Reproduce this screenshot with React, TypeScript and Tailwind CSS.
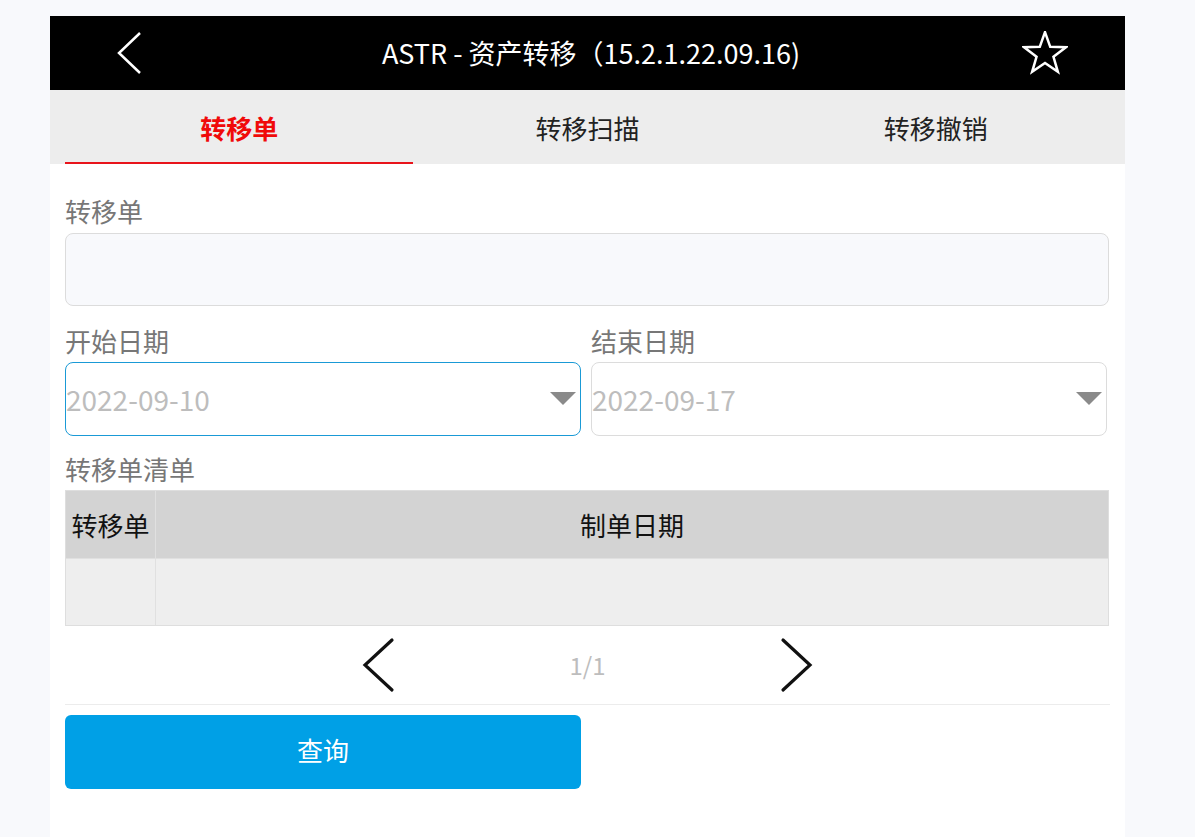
import { ReactNode } from 'react'

const font = { fontFamily: '"Noto Sans CJK SC", "Noto Sans", sans-serif' }

function Label({ children }: { children: ReactNode }) {
  return <div className="h-[36px] leading-[36px] text-[26px] text-[#777]">{children}</div>
}

function DateField({ value, active }: { value: string; active?: boolean }) {
  return (
    <div
      className={`flex h-[74px] flex-1 items-center justify-between rounded-lg border bg-white pr-[4px] ${
        active ? 'border-[#1a9ad6]' : 'border-[#dcdcdc]'
      }`}
    >
      <span className="text-[28px] text-[#bdbdbd]">{value}</span>
      <svg width="26" height="14" viewBox="0 0 26 14">
        <polygon points="0,0 26,0 13,13" fill="#8a8a8a" />
      </svg>
    </div>
  )
}

export default function App() {
  return (
    <div className="min-h-[837px] bg-[#f8f9fc] pt-[16px]" style={font}>
      <div className="ml-[50px] min-h-[821px] w-[1075px] bg-white">
        {/* Header */}
        <div className="flex h-[74px] items-center bg-black">
          <div className="pl-[60px]">
            <svg width="40" height="44" viewBox="0 0 40 44">
              <polyline points="30,2 9,22 30,42" fill="none" stroke="#fff" strokeWidth="2.5" />
            </svg>
          </div>
          <div className="flex-1 pl-[10px] text-center text-[27px] text-white">ASTR - 资产转移（15.2.1.22.09.16)</div>
          <div className="pr-[57px]">
            <svg width="46" height="44" viewBox="0 0 44 42">
              <polygon
                points="22,1 27,15.1 42,15.5 30.1,24.6 34.3,39 22,30.5 9.7,39 13.9,24.6 2,15.5 17,15.1"
                fill="none"
                stroke="#fff"
                strokeWidth="2.4"
                strokeLinejoin="miter"
              />
            </svg>
          </div>
        </div>

        {/* Tabs */}
        <div className="flex h-[74px] bg-[#ededed] px-[15px]">
          <div className="flex flex-1 items-center justify-center border-b-[2px] border-[#e8141b] pt-[2px] text-[26px] font-bold text-[#f00a0a]">
            转移单
          </div>
          <div className="flex flex-1 items-center justify-center text-[26px] text-[#222]">转移扫描</div>
          <div className="flex flex-1 items-center justify-center text-[26px] text-[#222]">转移撤销</div>
        </div>

        {/* Form */}
        <div className="px-[15px] pt-[29px]">
          <div className="pr-[1px]">
            <Label>转移单</Label>
            <div className="mt-[4px] h-[73px] rounded-lg border border-[#dcdcdc] bg-[#f8f9fc]" />
          </div>

          <div className="mt-[17px] flex gap-[10px] pr-[3px]">
            <div className="flex-1">
              <Label>开始日期</Label>
              <div className="mt-[3px] flex">
                <DateField value="2022-09-10" active />
              </div>
            </div>
            <div className="flex-1">
              <Label>结束日期</Label>
              <div className="mt-[3px] flex">
                <DateField value="2022-09-17" />
              </div>
            </div>
          </div>

          <div className="mt-[15px]">
            <Label>转移单清单</Label>
            <div className="mt-[3px] mr-[1px] border border-[#dedede]">
              <div className="flex h-[67px] bg-[#d3d3d3]">
                <div className="flex w-[90px] items-center justify-center border-r border-[#e0e0e0] text-[26px] text-[#111]">
                  转移单
                </div>
                <div className="flex flex-1 items-center justify-center text-[26px] text-[#111]">制单日期</div>
              </div>
              <div className="flex h-[67px] border-t border-[#e0e0e0] bg-[#eeeeee]">
                <div className="w-[90px] border-r border-[#e0e0e0]" />
                <div className="flex-1" />
              </div>
            </div>
          </div>

          {/* Pagination */}
          <div className="flex h-[79px] items-center justify-center border-b border-[#ececec]">
            <svg width="34" height="56" viewBox="0 0 34 56">
              <polyline points="30,3 3,28 30,53" fill="none" stroke="#111" strokeWidth="3.2" strokeLinecap="round" />
            </svg>
            <span className="mx-[173px] text-[24px] text-[#bdbdbd]">1/1</span>
            <svg width="34" height="56" viewBox="0 0 34 56">
              <polyline points="4,3 31,28 4,53" fill="none" stroke="#111" strokeWidth="3.2" strokeLinecap="round" />
            </svg>
          </div>

          <div className="mt-[10px] flex">
            <button className="h-[74px] w-[516px] rounded-md bg-[#00a0e6] pb-[6px] text-[26px] text-white">查询</button>
          </div>
        </div>
      </div>
    </div>
  )
}
